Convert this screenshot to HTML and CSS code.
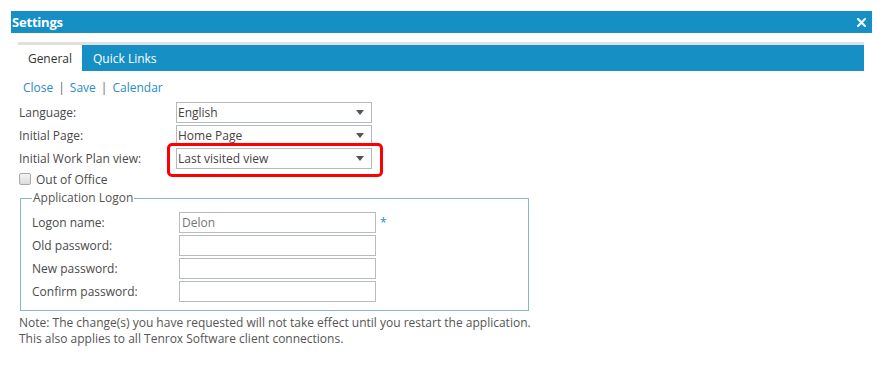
FILE: index.html
```html
<!DOCTYPE html>
<html lang="en">
<head>
  <meta charset="UTF-8" /><meta name="viewport" content="width=device-width, initial-scale=1"/>
  <title>Settings</title>
  <link rel="stylesheet" href="styles.css">
</head>
<body>
  <div class="titlebar">
    <span class="title">Settings</span>
    <svg class="close-x" width="9" height="9" viewBox="0 0 9 9">
      <path d="M1 1 L8 8 M8 1 L1 8" stroke="#e8f3fa" stroke-width="2.2" stroke-linecap="square"/>
    </svg>
  </div>

  <div class="main">
    <div class="tabs">
      <div class="tab active">General</div>
      <div class="tab">Quick Links</div>
    </div>

    <div class="links">
      <a href="#">Close</a><span class="sep">|</span><a href="#">Save</a><span class="sep">|</span><a href="#">Calendar</a>
    </div>

    <div class="form">
      <div class="row">
        <label>Language:</label>
        <div class="select"><span>English</span><i class="caret"></i></div>
      </div>
      <div class="row">
        <label>Initial Page:</label>
        <div class="select"><span>Home Page</span><i class="caret"></i></div>
      </div>
      <div class="row">
        <label>Initial Work Plan view:</label>
        <div class="select marked"><span>Last visited view</span><i class="caret"></i></div>
      </div>
      <div class="check-row">
        <span class="checkbox"></span>
        <span>Out of Office</span>
      </div>
    </div>

    <fieldset class="logon">
      <legend>Application Logon</legend>
      <div class="row">
        <label>Logon name:</label>
        <div class="input">Delon</div>
        <span class="req">*</span>
      </div>
      <div class="row">
        <label>Old password:</label>
        <div class="input"></div>
      </div>
      <div class="row">
        <label>New password:</label>
        <div class="input"></div>
      </div>
      <div class="row">
        <label>Confirm password:</label>
        <div class="input"></div>
      </div>
    </fieldset>

    <p class="note">Note: The change(s) you have requested will not take effect until you restart the application.<br/>
    This also applies to all Tenrox Software client connections.</p>
  </div>
</body>
</html>
```

FILE: styles.css
```css
* { box-sizing: border-box; margin: 0; padding: 0; }
body {
  font-family: 'Open Sans', sans-serif;
  font-size: 12px;
  color: #4a4a4a;
  background: #fff;
  padding-top: 11px;
}

/* Title bar */
.titlebar {
  display: flex;
  align-items: center;
  justify-content: space-between;
  height: 22px;
  margin: 0 12px 0 11px;
  padding: 0 6px 0 1px;
  background: #168fc5;
}
.title {
  color: #fff;
  font-weight: bold;
  font-size: 13px;
  letter-spacing: -0.2px;
}
.close-x { display: block; }

.main {
  margin: 9px 20px 0 18px;
}

/* Tabs */
.tabs {
  display: flex;
  height: 29px;
  border-top: 3px solid #e0e0e0;
  background: #168fc5;
}
.tab {
  display: flex;
  align-items: center;
  padding: 0 11px;
  color: #fff;
}
.tab.active {
  width: 64px;
  justify-content: center;
  padding: 0;
  background: #fff;
  color: #333;
}

/* Links */
.links {
  margin-top: 9px;
  padding-left: 5px;
  line-height: 16px;
}
.links a { color: #2a8bc8; text-decoration: none; }
.links .sep { color: #666; margin: 0 5px; }

/* Form rows */
.form { margin-top: 6px; padding-left: 1px; }
.row {
  display: flex;
  align-items: center;
  height: 20px;
  margin-bottom: 3px;
}
.row label { width: 157px; }
.select {
  position: relative;
  display: flex;
  align-items: center;
  justify-content: space-between;
  width: 196px;
  height: 21px;
  padding: 0 7px 0 1px;
  border: 1px solid #b3b9bd;
  color: #444;
}
.caret {
  width: 0; height: 0;
  border-left: 4.5px solid transparent;
  border-right: 4.5px solid transparent;
  border-top: 5px solid #555;
}
.select.marked::after {
  content: "";
  position: absolute;
  left: -10px; right: -12px; top: -6px; bottom: -9px;
  border: 3px solid #f00;
  border-radius: 5px;
}

.check-row {
  display: flex;
  align-items: center;
  gap: 5px;
  height: 14px;
  margin-top: 4px;
}
.checkbox {
  width: 12px; height: 12px;
  border: 1px solid #a8a8a8;
  border-radius: 2px;
  background: linear-gradient(#f4f4f4, #dcdcdc);
}

/* Application logon */
.logon {
  width: 509px;
  margin: 4px 0 0 2px;
  padding: 6px 0 6px 11px;
  border: 1px solid #8db3cc;
}
.logon legend {
  padding: 0 1px;
  margin-left: 0;
  line-height: 16px;
  color: #555;
}
.logon .row label { width: 147px; }
.input {
  width: 197px;
  height: 21px;
  padding: 1px 0 0 2px;
  border: 1px solid #b7bcbf;
  color: #777;
}
.req { color: #2a8bc8; margin-left: 4px; }

.note {
  margin: 4px 0 0 1px;
  line-height: 16px;
  color: #555;
}
```
